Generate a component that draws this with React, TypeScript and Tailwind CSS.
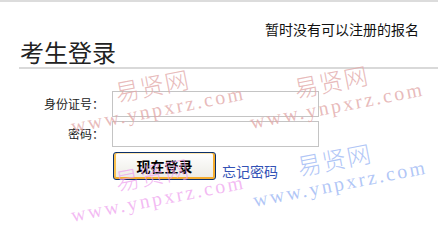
import React from "react";

const cjk = "font-['Noto_Sans_CJK_SC',sans-serif]";

// faint diagonal site watermark laid over the form
const Mark = ({ className, color }: { className: string; color: string }) => (
  <div
    className={`absolute origin-bottom-left -rotate-[11deg] flex flex-col whitespace-nowrap ${color} ${className}`}
  >
    <span className={`pl-[50px] text-[24px] leading-[30px] font-light tracking-[1px] ${cjk}`}>
      易贤网
    </span>
    <span className="text-[20px] leading-[20px] tracking-[2.5px] font-['Liberation_Serif',serif]">
      www.ynpxrz.com
    </span>
  </div>
);

const Field = ({ label, type }: { label: string; type: string }) => (
  <div className="flex items-center">
    <label className={`w-[104px] text-right text-[12px] leading-[16px] text-[#222] ${cjk}`}>
      {label}
    </label>
    <input
      type={type}
      className="ml-[8px] w-[207px] h-[26px] border border-[#c4c4c4] bg-transparent outline-none"
    />
  </div>
);

export default function App() {
  return (
    <div className={`relative w-[438px] h-[243px] overflow-hidden bg-white ${cjk}`}>
      <div className="border-t-2 border-[#dcdcdc]">
        <p className="mt-[17px] pr-[19px] text-right text-[14px] leading-[20px] text-[#111]">
          暂时没有可以注册的报名
        </p>
        <h1 className="ml-[19px] mt-[1px] pl-[1px] pb-[3px] border-b-2 border-[#d9d9d9] text-[24px] leading-[24px] font-normal text-[#222]">
          考生登录
        </h1>

        <form className="mt-[22px] flex flex-col gap-[4px]">
          <Field label="身份证号：" type="text" />
          <Field label="密码：" type="password" />
          <div className="mt-[1px] ml-[113px] flex items-end gap-[6px]">
            <button
              type="button"
              className="w-[103px] h-[28px] rounded-[3px] border border-[#0a2f6a] bg-gradient-to-b from-white to-[#ecebe4] shadow-[inset_0_-2px_0_#f5ad30,inset_2px_0_0_#f8c04f,inset_-2px_0_0_#f5ad30,inset_0_1px_0_#ffe7b0] text-[14px] leading-[20px] font-bold text-black"
            >
              现在登录
            </button>
            <a href="#" className="mb-[-1px] text-[14px] leading-[20px] text-[#3352b5]">
              忘记密码
            </a>
          </div>
        </form>
      </div>

      <div className="pointer-events-none absolute inset-0">
        <Mark className="left-[73px] top-[86px]" color="text-[#e2a9a9]/80" />
        <Mark className="left-[252px] top-[82px]" color="text-[#e2a9a9]/80" />
        <Mark className="left-[73px] top-[175px]" color="text-[#ee9cee]/70" />
        <Mark className="left-[255px] top-[160px]" color="text-[#98b4f4]/75" />
      </div>
    </div>
  );
}
